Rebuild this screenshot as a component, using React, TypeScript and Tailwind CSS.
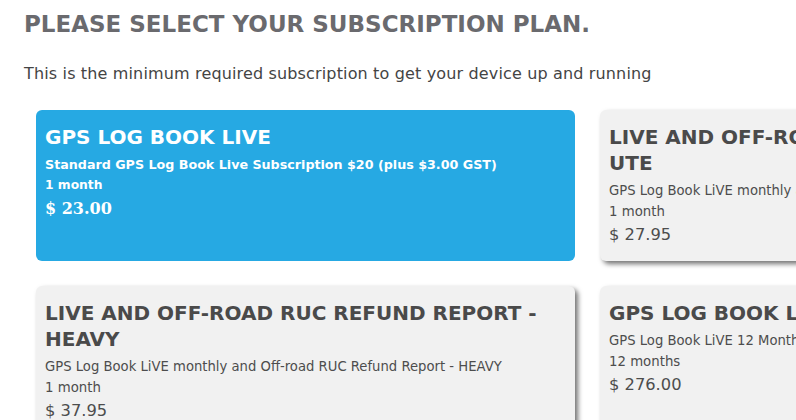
const plans = [
  {
    title: "GPS LOG BOOK LIVE",
    desc: "Standard GPS Log Book Live Subscription $20 (plus $3.00 GST)",
    term: "1 month",
    price: "$ 23.00",
    selected: true,
  },
  {
    title: "LIVE AND OFF-ROAD RUC REFUND REPORT - UTE",
    desc: "GPS Log Book LiVE monthly and Off-road RUC Refund Report - UTE",
    term: "1 month",
    price: "$ 27.95",
  },
  {
    title: "LIVE AND OFF-ROAD RUC REFUND REPORT - HEAVY",
    desc: "GPS Log Book LiVE monthly and Off-road RUC Refund Report - HEAVY",
    term: "1 month",
    price: "$ 37.95",
  },
  {
    title: "GPS LOG BOOK LIVE 12 MONTHS",
    desc: "GPS Log Book LiVE 12 Months Subscription",
    term: "12 months",
    price: "$ 276.00",
  },
];

type Plan = (typeof plans)[number] & { selected?: boolean };

function PlanCard({ plan }: { plan: Plan }) {
  const on = !!plan.selected;
  return (
    <div
      className={
        on
          ? "rounded-[6px] bg-[#26a9e3] px-[9px] pt-[14px] pb-[13px] text-white"
          : "rounded-[6px] bg-[#f1f1f1] px-[9px] pt-[14px] pb-[13px] text-[#4d4d4d] shadow-[3px_3px_5px_rgba(0,0,0,0.55)]"
      }
    >
      <h3
        className={
          "text-[20px] leading-[26px] font-bold " +
          (on ? "text-white" : "text-[#4a4a4a]")
        }
      >
        {plan.title}
      </h3>
      <p
        className={
          "mt-[4px] leading-[21px] " +
          (on ? "text-[12.7px] font-bold" : "text-[13.2px]")
        }
      >
        {plan.desc}
      </p>
      <p className={"leading-[21px] " + (on ? "text-[12.3px] font-bold" : "text-[13.3px]")}>
        {plan.term}
      </p>
      <p
        className={
          "leading-[26px] " +
          (on ? "text-[16px] font-bold font-['DejaVu_Serif',serif]" : "text-[16.3px]")
        }
      >
        {plan.price}
      </p>
    </div>
  );
}

export default function App() {
  return (
    <div className="h-[420px] w-[796px] overflow-hidden bg-white font-['DejaVu_Sans',sans-serif]">
      <div className="px-[24px] pt-[9px]">
        <h1 className="text-[23px] leading-[30px] font-bold text-[#6a6a6e]">
          PLEASE SELECT YOUR SUBSCRIPTION PLAN.
        </h1>
        <p className="mt-[24px] text-[16px] leading-[22px] tracking-[0.15px] text-[#444]">
          This is the minimum required subscription to get your device up and running
        </p>
      </div>
      <div className="mt-[25px] grid w-max grid-cols-[539px_539px] gap-[25px] pl-[36px]">
        {plans.map((p) => (
          <PlanCard key={p.title} plan={p} />
        ))}
      </div>
    </div>
  );
}
